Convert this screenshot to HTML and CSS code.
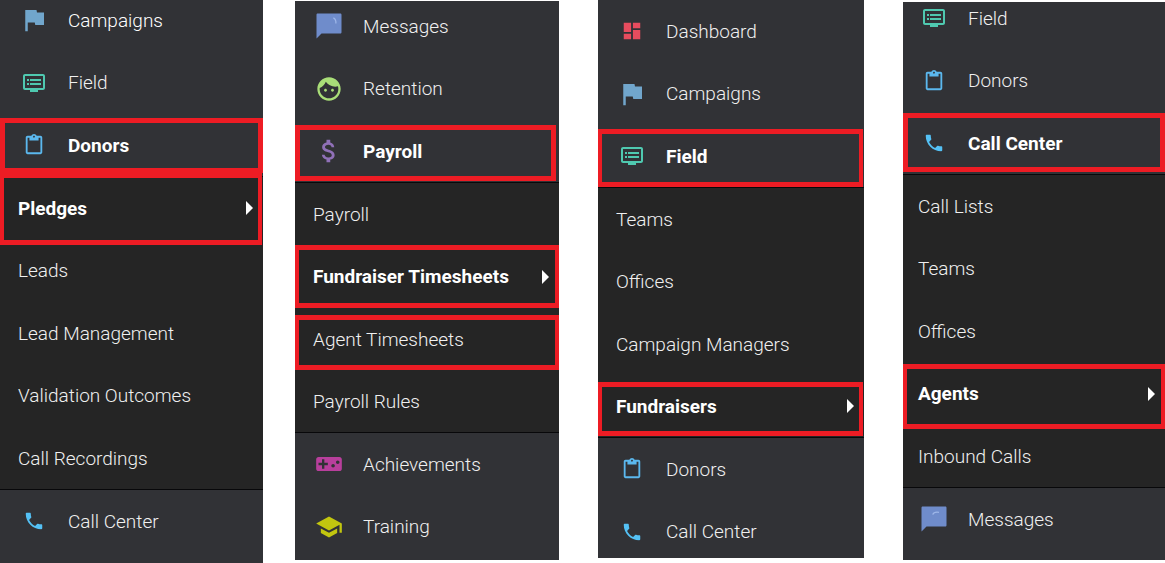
FILE: index.html
```html
<!DOCTYPE html>
<html lang="en">
<head>
  <meta charset="UTF-8" />
  <meta name="viewport" content="width=device-width, initial-scale=1.0"/>
  <title>Navigation Menus</title>
  <link rel="stylesheet" href="styles.css">
</head>
<body>

  <!-- Shared icons -->
  <svg class="icon-defs" aria-hidden="true">
    <symbol id="flag" viewBox="0 0 24 24"><path d="M14.4 6L14 4H5v17h2v-7h5.6l.4 2h7V6z"/></symbol>
    <symbol id="field" viewBox="0 0 24 24"><path d="M21 3H3c-1.1 0-2 .9-2 2v12c0 1.1.9 2 2 2h5v2h8v-2h5c1.1 0 2-.9 2-2V5c0-1.1-.9-2-2-2zm0 14H3V5h18v12zm-2-9H8v2h11V8zm0 4H8v2h11v-2zM7 8H5v2h2V8zm0 4H5v2h2v-2z"/></symbol>
    <symbol id="clipboard" viewBox="0 0 24 24"><path d="M19 2h-4.18C14.4.84 13.3 0 12 0c-1.3 0-2.4.84-2.82 2H5c-1.1 0-2 .9-2 2v16c0 1.1.9 2 2 2h14c1.1 0 2-.9 2-2V4c0-1.1-.9-2-2-2zm-7 0c.55 0 1 .45 1 1s-.45 1-1 1-1-.45-1-1 .45-1 1-1zm7 18H5V4h2v3h10V4h2v16z"/></symbol>
    <symbol id="phone" viewBox="0 0 24 24"><path d="M6.62 10.79c1.44 2.83 3.76 5.14 6.59 6.59l2.2-2.2c.27-.27.67-.36 1.02-.24 1.12.37 2.33.57 3.57.57.55 0 1 .45 1 1V20c0 .55-.45 1-1 1-9.39 0-17-7.61-17-17 0-.55.45-1 1-1h3.5c.55 0 1 .45 1 1 0 1.25.2 2.45.57 3.57.11.35.03.74-.25 1.02l-2.2 2.2z"/></symbol>
    <symbol id="message" viewBox="0 0 24 24"><path d="M21 2H3c-.6 0-1 .4-1 1v19l4-4h15c.6 0 1-.4 1-1V3c0-.6-.4-1-1-1z"/></symbol>
    <symbol id="face" viewBox="0 0 24 24"><path d="M9 11.75c-.69 0-1.25.56-1.25 1.25s.56 1.25 1.25 1.25 1.25-.56 1.25-1.25-.56-1.25-1.25-1.25zm6 0c-.69 0-1.25.56-1.25 1.25s.56 1.25 1.25 1.25 1.25-.56 1.25-1.25-.56-1.25-1.25-1.25zM12 2C6.48 2 2 6.48 2 12s4.48 10 10 10 10-4.48 10-10S17.52 2 12 2zm0 18c-4.41 0-8-3.59-8-8 0-.29.02-.58.05-.86 2.36-1.05 4.23-2.98 5.21-5.37C11.07 8.33 14.05 10 17.42 10c.78 0 1.53-.09 2.25-.26.21.71.33 1.47.33 2.26 0 4.41-3.59 8-8 8z"/></symbol>
    <symbol id="money" viewBox="0 0 24 24"><path d="M11.8 10.9c-2.27-.59-3-1.2-3-2.15 0-1.09 1.01-1.85 2.7-1.85 1.78 0 2.44.85 2.5 2.1h2.21c-.07-1.72-1.12-3.3-3.21-3.81V3h-3v2.16c-1.94.42-3.5 1.68-3.5 3.61 0 2.31 1.91 3.46 4.7 4.13 2.5.6 3 1.48 3 2.41 0 .69-.49 1.79-2.7 1.79-2.06 0-2.87-.92-2.98-2.1h-2.2c.12 2.19 1.76 3.42 3.68 3.83V21h3v-2.15c1.95-.37 3.5-1.5 3.5-3.55 0-2.84-2.43-3.81-4.7-4.4z"/></symbol>
    <symbol id="gamepad" viewBox="0 0 24 24"><path d="M21 6H3c-1.100 0-2 .9-2 2v8c0 1.100.9 2 2 2h18c1.100 0 2-.9 2-2V8c0-1.100-.9-2-2-2zm-10 7H8v3H6v-3H3v-2h3V8h2v3h3v2zm4.500 2c-.83 0-1.500-.67-1.500-1.500s.67-1.500 1.500-1.500 1.500.67 1.500 1.500-.67 1.500-1.500 1.500zm4-3c-.83 0-1.500-.67-1.500-1.500S18.670 9 19.500 9s1.500.67 1.500 1.500-.67 1.500-1.500 1.500z"/></symbol>
    <symbol id="school" viewBox="0 0 24 24"><path d="M5 13.18v4L12 21l7-3.82v-4L12 17l-7-3.82zM12 3L1 9l11 6 9-4.91V17h2V9L12 3z"/></symbol>
    <symbol id="dashboard" viewBox="0 0 24 24"><path d="M3 13h8V3H3v10zm0 8h8v-6H3v6zm10 0h8V11h-8v10zm0-18v6h8V3h-8z"/></symbol>
  </svg>

  <main class="panels">

    <nav class="sidebar sidebar-donors" aria-label="Donors menu">
      <ul class="menu">
        <li><a href="#"><span class="icon-box"><svg class="icon large flag"><use href="#flag"/></svg></span>Campaigns</a></li>
        <li><a href="#"><span class="icon-box"><svg class="icon field"><use href="#field"/></svg></span>Field</a></li>
        <li><a href="#" class="active mark mark-donors"><span class="icon-box"><svg class="icon small clipboard"><use href="#clipboard"/></svg></span>Donors</a></li>
        <li class="group">
          <ul class="submenu">
            <li><a href="#" class="active arrow mark mark-pledges">Pledges</a></li>
            <li><a href="#">Leads</a></li>
            <li><a href="#">Lead Management</a></li>
            <li><a href="#">Validation Outcomes</a></li>
            <li><a href="#">Call Recordings</a></li>
          </ul>
        </li>
        <li><a href="#"><span class="icon-box"><svg class="icon small phone"><use href="#phone"/></svg></span>Call Center</a></li>
      </ul>
    </nav>

    <nav class="sidebar sidebar-payroll" aria-label="Payroll menu">
      <ul class="menu">
        <li><a href="#"><span class="icon-box"><svg class="icon large message" viewBox="0 0 24 24"><use href="#message"/><path class="shine" d="M15.5 5.5c1.6.8 2.2 2.6 2 4.5"/></svg></span>Messages</a></li>
        <li><a href="#"><span class="icon-box"><svg class="icon medium face"><use href="#face"/></svg></span>Retention</a></li>
        <li><a href="#" class="active mark mark-payroll"><span class="icon-box"><svg class="icon large money"><use href="#money"/></svg></span>Payroll</a></li>
        <li class="group">
          <ul class="submenu">
            <li><a href="#">Payroll</a></li>
            <li><a href="#" class="active arrow mark mark-fundraiser-time">Fundraiser Timesheets</a></li>
            <li><a href="#" class="mark mark-agent-time">Agent Timesheets</a></li>
            <li><a href="#">Payroll Rules</a></li>
          </ul>
        </li>
        <li><a href="#"><span class="icon-box"><svg class="icon medium gamepad"><use href="#gamepad"/></svg></span>Achievements</a></li>
        <li><a href="#"><span class="icon-box"><svg class="icon medium school"><use href="#school"/></svg></span>Training</a></li>
      </ul>
    </nav>

    <nav class="sidebar sidebar-field" aria-label="Field menu">
      <ul class="menu">
        <li><a href="#"><span class="icon-box"><svg class="icon small dashboard"><use href="#dashboard"/></svg></span>Dashboard</a></li>
        <li><a href="#"><span class="icon-box"><svg class="icon large flag"><use href="#flag"/></svg></span>Campaigns</a></li>
        <li><a href="#" class="active mark mark-field"><span class="icon-box"><svg class="icon field"><use href="#field"/></svg></span>Field</a></li>
        <li class="group">
          <ul class="submenu">
            <li><a href="#">Teams</a></li>
            <li><a href="#">Offices</a></li>
            <li><a href="#">Campaign Managers</a></li>
            <li><a href="#" class="active arrow mark mark-fundraisers">Fundraisers</a></li>
          </ul>
        </li>
        <li><a href="#"><span class="icon-box"><svg class="icon small clipboard"><use href="#clipboard"/></svg></span>Donors</a></li>
        <li><a href="#"><span class="icon-box"><svg class="icon small phone"><use href="#phone"/></svg></span>Call Center</a></li>
      </ul>
    </nav>

    <nav class="sidebar sidebar-calls" aria-label="Call Center menu">
      <ul class="menu">
        <li><a href="#"><span class="icon-box"><svg class="icon field"><use href="#field"/></svg></span>Field</a></li>
        <li><a href="#"><span class="icon-box"><svg class="icon small clipboard"><use href="#clipboard"/></svg></span>Donors</a></li>
        <li><a href="#" class="active mark mark-calls"><span class="icon-box"><svg class="icon small phone"><use href="#phone"/></svg></span>Call Center</a></li>
        <li class="group">
          <ul class="submenu">
            <li><a href="#">Call Lists</a></li>
            <li><a href="#">Teams</a></li>
            <li><a href="#">Offices</a></li>
            <li><a href="#" class="active arrow mark mark-agents">Agents</a></li>
            <li><a href="#">Inbound Calls</a></li>
          </ul>
        </li>
        <li><a href="#"><span class="icon-box"><svg class="icon large message" viewBox="0 0 24 24"><use href="#message"/><path class="shine" d="M11 8.5c.6-1.7 2.5-2.2 5-1.800"/></svg></span>Messages</a></li>
      </ul>
    </nav>

  </main>

</body>
</html>
```
FILE: styles.css
```css
* {
  box-sizing: border-box;
}

body {
  font-family: Roboto, Arial, sans-serif;
  font-size: 19px;
  font-weight: 300;
  margin: 0;
  background-color: #fff;
}

ul {
  list-style: none;
  margin: 0;
  padding: 0;
}

.icon-defs {
  display: none;
}

.panels {
  display: flex;
  height: 100vh;
}

.sidebar {
  flex: 263 1 0;
  min-width: 0;
  background-color: #313236;
  overflow: hidden;
}

.sidebar-payroll {
  flex-grow: 264;
  margin: 1px 0 3px 32px;
}

.sidebar-field {
  flex-grow: 266;
  margin: 0 0 5px 39px;
}

.sidebar-calls {
  flex-grow: 262;
  margin: 2px 0 3px 39px;
}

/* each menu is scrolled to a different place */
.sidebar-donors .menu {
  margin-top: -11px;
}

.sidebar-payroll .menu {
  margin-top: -6px;
}

.sidebar-calls .menu {
  margin-top: -15px;
}

.menu a {
  position: relative;
  display: flex;
  align-items: center;
  gap: 18px;
  height: 62px;
  padding: 0 10px 0 18px;
  color: #f0f0f0;
  text-decoration: none;
  white-space: nowrap;
}

.menu li:nth-child(even) > a {
  height: 63px;
}

.submenu li:last-child > a {
  height: 62px;
}

.sidebar-calls .menu a {
  padding-left: 15px;
}

.menu a:hover,
.menu a.active {
  color: #fff;
}

.menu a.active {
  font-weight: bold;
}

.submenu {
  background-color: #252525;
  border-top: 1px solid #08080a;
  border-bottom: 1px solid #08080a;
}

.arrow::before {
  content: "";
  order: 2;
  margin-left: auto;
  border-left: 7px solid #fff;
  border-top: 7px solid transparent;
  border-bottom: 7px solid transparent;
}

/* Icons */
.icon-box {
  display: flex;
  align-items: center;
  justify-content: center;
  width: 32px;
}

.icon {
  width: 24px;
  height: 24px;
  fill: currentColor;
}

.small {
  width: 22px;
  height: 22px;
}

.medium {
  width: 28px;
  height: 28px;
}

.large {
  width: 30px;
  height: 30px;
}

.flag { color: #71a6cc; }
.field { color: #4fc9b0; }
.clipboard { color: #5bb8ee; }
.phone { color: #54c1f5; }
.message { color: #6f8ccb; }
.face { color: #a9de78; }
.money { color: #9070b8; }
.gamepad { color: #b83f9c; }
.school { color: #c2c60f; }
.dashboard { color: #e74c5e; }

.shine {
  fill: none;
  stroke: #9db6e8;
  stroke-width: 1;
}

/* Red frames around the steps to follow */
.mark::after {
  content: "";
  position: absolute;
  inset: 0;
  border: 5px solid #ed1c24;
  z-index: 1;
}

.mark-donors::after { inset: 4px 0 3px; }
.mark-pledges::after { inset: -4px 1px -6px 0; }
.mark-payroll::after { inset: 5px 3px 1px 0; }
.mark-agent-time::after { inset: 7px 0 0; }
.mark-field::after { inset: 4px 1px 0 0; }
.mark-fundraisers::after { inset: 7px 1px 1px 0; }
.mark-calls::after { inset: 1px 0 2px; }
.mark-agents::after { inset: 2px 0 -4px; }

.submenu .mark::after,
.mark-field::after {
  border-left-width: 4px;
  border-right-width: 4px;
}
```
